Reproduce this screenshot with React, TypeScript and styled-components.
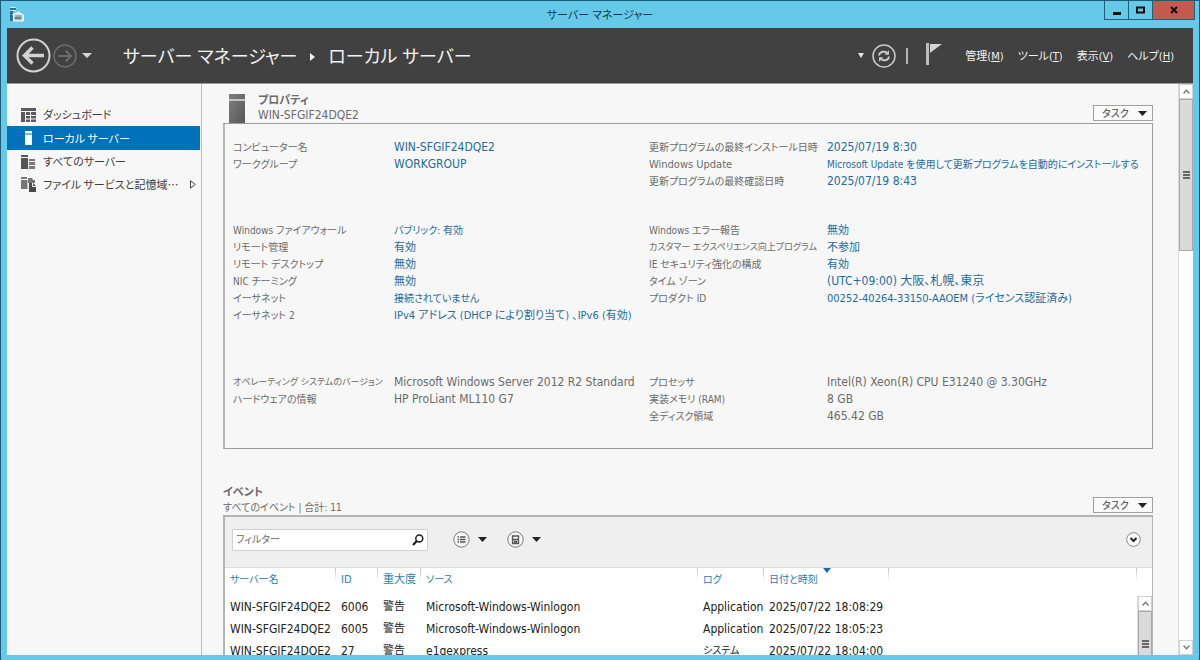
import React from "react";
import styled, { createGlobalStyle } from "styled-components";

const Global = createGlobalStyle`
  *, *::before, *::after { box-sizing: border-box; }
  body {
    margin: 0;
    font-family: "DejaVu Sans Condensed", "Noto Sans CJK JP", sans-serif;
    font-feature-settings: "palt";
    font-size: 11px;
    line-height: 17px;
    color: #6b6b6b;
    background: #66c9e9;
  }
  button, input { font: inherit; font-feature-settings: inherit; color: inherit; }
  button { padding: 0; border: 0; background: none; }
  svg { display: block; flex: none; }
`;

const Window = styled.div`
  display: flex;
  flex-direction: column;
  height: 100vh;
  padding: 0 6px 5px;
  overflow: hidden;
  background: #66c9e9;
  border: 1px solid #1b5b77;
  border-bottom: 0;
`;

const TitleBar = styled.header`
  display: grid;
  grid-template-columns: 1fr auto 1fr;
  flex: none;
  height: 27px;
  color: #12394a;
`;

const AppMark = styled.div`
  padding: 5px 0 0 2px;
`;

const WindowTitle = styled.h1`
  margin: 0;
  font-size: 11px;
  font-weight: 400;
  line-height: 30px;
`;

const Captions = styled.div`
  display: flex;
  justify-content: flex-end;
  align-items: flex-start;
  margin-right: -2px;
`;

const Caption = styled.button<{ $close?: boolean }>`
  display: grid;
  place-items: center;
  width: ${(p) => (p.$close ? 42 : 25)}px;
  height: 19px;
  border: 1px solid #1f5f78;
  border-top: 0;
  border-left-width: ${(p) => (p.$close ? 0 : 1)}px;
  margin-left: ${(p) => (p.$close ? 0 : -1)}px;
  background: ${(p) => (p.$close ? "#c35a50" : "transparent")};
`;

const Banner = styled.div`
  display: flex;
  align-items: center;
  flex: none;
  height: 56px;
  padding: 0 19px 0 9px;
  color: #f2f2f2;
  background: #414141;
  border-bottom: 1px solid #9a9a9a;
`;

const History = styled.div`
  display: flex;
  align-items: center;
  gap: 2px;
  width: 107px;
`;

const HistoryMenu = styled.button`
  margin-left: 3px;
`;

const Breadcrumb = styled.h2`
  display: flex;
  align-items: center;
  flex: 1;
  gap: 13px;
  margin: 0;
  padding-top: 2px;
  font-size: 18px;
  font-weight: 400;
  line-height: 28px;
  white-space: nowrap;
`;

const Tools = styled.div`
  display: flex;
  align-items: center;
  gap: 8px;
  margin-right: 23px;
`;

const Divider = styled.span`
  width: 2px;
  height: 16px;
  margin-left: 2px;
  background: #b5b5b5;
`;

const FlagButton = styled.button`
  margin: 0 0 4px 10px;
`;

const Menu = styled.nav`
  display: flex;
  gap: 14px;
  padding-top: 2px;
  white-space: nowrap;
`;

const Body = styled.div`
  display: flex;
  flex: 1;
  min-height: 0;
  background: #f7f7f7;
`;

const Sidebar = styled.nav`
  flex: none;
  width: 195px;
  padding-top: 19px;
  border-right: 1px solid #bdbdbd;
`;

const NavItem = styled.a<{ $active?: boolean }>`
  display: grid;
  grid-template-columns: 16px 1fr auto;
  align-items: center;
  gap: 6px;
  height: ${(p) => (p.$active ? 24 : 23)}px;
  padding: 0 4px 0 14px;
  margin-right: 1px;
  font-family: "Noto Sans CJK JP", sans-serif;
  font-size: 11px;
  white-space: nowrap;
  text-decoration: none;
  color: ${(p) => (p.$active ? "#fff" : "#3c3c3c")};
  background: ${(p) => (p.$active ? "#0072bc" : "transparent")};
`;

const Content = styled.main`
  display: flex;
  flex-direction: column;
  flex: 1;
  min-width: 0;
  padding: 9px 25px 0 21px;
`;

const SectionHead = styled.div`
  display: flex;
  justify-content: space-between;
  align-items: flex-end;
`;

const HeadTitle = styled.div`
  display: flex;
  align-items: center;
  gap: 13px;
`;

const Heading = styled.h3`
  margin: 0;
  font-size: 11px;
  font-weight: 700;
  line-height: 15px;
`;

const Sub = styled.p<{ $size: number }>`
  margin: 0;
  font-size: ${(p) => p.$size}px;
  line-height: 15px;
`;

const ServerIcon = styled.span`
  margin-left: 6px;
`;

const TaskButton = styled.button`
  display: flex;
  justify-content: space-between;
  align-items: center;
  width: 60px;
  height: 16px;
  padding: 0 5px 0 8px;
  margin-bottom: 2px;
  font-size: 10px;
  color: #444;
  background: #fafafa;
  border: 1px solid #a0a0a0;
`;

const PropertyPanel = styled.div`
  display: flex;
  flex-direction: column;
  flex: none;
  padding: 15px 0 23px 8px;
  border: 1px solid #9d9d9d;
  border-left: 2px solid #b4b4b4;
`;

const Group = styled.div<{ $gap: number }>`
  display: grid;
  grid-template-columns: 416px 1fr;
  margin-top: ${(p) => p.$gap}px;
`;

const List = styled.dl<{ $label: number }>`
  display: grid;
  grid-template-columns: ${(p) => p.$label}px 1fr;
  grid-auto-rows: 17px;
  align-content: start;
  margin: 0;
  white-space: nowrap;
`;

const Term = styled.dt<{ $size: number }>`
  font-size: ${(p) => p.$size}px;
`;

const Detail = styled.dd<{ $size: number }>`
  margin: 0;
  font-size: ${(p) => p.$size}px;
`;

const Link = styled.a`
  color: #1f6c9f;
  text-decoration: none;
`;

const EventSection = styled.section`
  display: flex;
  flex-direction: column;
  flex: 1;
  min-height: 0;
  margin-top: 36px;
`;

const EventPanel = styled.div`
  display: flex;
  flex-direction: column;
  flex: 1;
  min-height: 0;
  overflow: hidden;
  border: solid #b4b4b4;
  border-width: 2px 1px 0 2px;
  background: #fff;
`;

const FilterBar = styled.div`
  display: flex;
  align-items: center;
  flex: none;
  height: 51px;
  padding: 0 11px 5px 7px;
  background: #efefef;
  border-bottom: 1px solid #dcdcdc;
`;

const Search = styled.label`
  display: flex;
  align-items: center;
  width: 196px;
  height: 22px;
  padding: 0 3px;
  background: #fff;
  border: 1px solid #d0d0d0;
`;

const SearchInput = styled.input`
  flex: 1;
  min-width: 0;
  padding: 0;
  border: 0;
  outline: 0;
  font-size: 10px;
  background: none;
  &::placeholder { color: #6b6b6b; opacity: 1; }
`;

const RoundMenu = styled.button`
  display: flex;
  align-items: center;
  gap: 8px;
  margin-left: 25px;
  & + & { margin-left: 20px; }
`;

const Expand = styled.button`
  margin-left: auto;
`;

const TableArea = styled.div`
  display: flex;
  flex: 1;
  min-height: 0;
`;

const Table = styled.table`
  flex: 1;
  align-self: flex-start;
  width: 0;
  table-layout: fixed;
  border-collapse: collapse;
  color: #222;
  white-space: nowrap;
`;

const Th = styled.th<{ $w?: number; $size?: number }>`
  position: relative;
  width: ${(p) => (p.$w ? `${p.$w}px` : "auto")};
  height: 28px;
  padding: 3px 0 0 5px;
  font-size: ${(p) => p.$size ?? 10}px;
  font-weight: 400;
  text-align: left;
  vertical-align: top;
  color: #1f7fb5;
  background: linear-gradient(#c4c4c4, #fff) right top / 1px 14px no-repeat;
`;

const SortMark = styled.span`
  position: absolute;
  top: 0;
  right: 58px;
`;

const Td = styled.td<{ $size?: number }>`
  height: 22px;
  padding: 0 0 0 5px;
  font-size: ${(p) => p.$size ?? 12}px;
  line-height: 22px;
`;

const InnerScroll = styled.div`
  display: flex;
  flex: none;
  padding-top: 28px;
`;

const Track = styled.div`
  display: flex;
  flex-direction: column;
  flex: none;
  width: 15px;
  background: #fff;
  border-left: 1px solid #dadada;
`;

const ScrollStep = styled.button`
  display: grid;
  place-items: center;
  flex: none;
  height: 15px;
  background: #fff;
  border: 1px solid #d0d0d0;
`;

const Thumb = styled.div<{ $size: number }>`
  display: grid;
  place-items: center;
  flex: 0 0 ${(p) => p.$size}px;
  background: #dadada;
  border: 1px solid #aaa;
`;

const Spacer = styled.div`
  flex: 1;
`;

const Caret = ({ w = 9, color = "#222" }: { w?: number; color?: string }) => (
  <svg width={w} height={5} viewBox="0 0 10 5" preserveAspectRatio="none">
    <path d="M0 0h10L5 5z" fill={color} />
  </svg>
);

const Chevron = ({ down }: { down?: boolean }) => (
  <svg width="7" height="5" viewBox="0 0 7 5">
    <path d={down ? "M0.5 0.5L3.5 3.8L6.5 0.5" : "M0.5 4.5L3.5 1.2L6.5 4.5"} fill="none" stroke="#777" strokeWidth="1.4" />
  </svg>
);

const Grip = () => (
  <svg width="7" height="8" viewBox="0 0 7 8">
    <path d="M0 1h7M0 4h7M0 7h7" stroke="#666" strokeWidth="2" />
  </svg>
);

const BackIcon = () => (
  <svg width="35" height="35" viewBox="0 0 35 35" fill="none" stroke="#d2d2d2">
    <circle cx="17.500" cy="17.500" r="16" strokeWidth="2" />
    <path d="M28 17.500H10M16.500 9.500L8.500 17.500L16.500 25.500" strokeWidth="3.500" />
  </svg>
);

const ForwardIcon = () => (
  <svg width="24" height="24" viewBox="0 0 24 24" fill="none" stroke="#6b6b6b">
    <circle cx="12" cy="12" r="11" strokeWidth="1.600" />
    <path d="M5 12H17.500M12.500 6.500L18 12L12.500 17.500" strokeWidth="2.200" />
  </svg>
);

const RefreshIcon = () => (
  <svg width="24" height="24" viewBox="0 0 24 24" fill="none" stroke="#c8c8c8">
    <circle cx="12" cy="12" r="11" strokeWidth="1.5" />
    <path d="M7 11.500C7.500 8.500 10 7.600 12.500 7.800C14 7.900 15 8.700 15.800 9.600M17 12.500C16.500 15.500 14 16.400 11.500 16.200C10 16.100 9 15.300 8.200 14.400" strokeWidth="1.9" />
    <path d="M17 6.200V10.800H12.400zM7 17.800V13.200H11.600z" fill="#c8c8c8" stroke="none" />
  </svg>
);

const FlagIcon = () => (
  <svg width="16" height="22" viewBox="0 0 16 22">
    <path d="M0 0h3v22H0z" fill="#bdbdbd" />
    <path d="M4 1h12L4 10z" fill="#d2d2d2" />
  </svg>
);

const AppIcon = () => (
  <svg width="15" height="16" viewBox="0 0 15 16">
    <path d="M1 1h6v3H1zM1 5h3v10H1z" fill="#2f7391" />
    <path d="M1 1.500h6M1 4.500h6" stroke="#c9e7f0" />
    <path d="M3.500 8.500L9.500 6L14.500 9V15H4.500V9z" fill="#d5e6e8" stroke="#eef6f6" />
    <path d="M6 10h7M6 13V11.500h6V13z" stroke="#657f86" fill="#8aa4aa" />
  </svg>
);

const DashboardIcon = () => (
  <svg width="15" height="14" viewBox="0 0 15 14" fill="#5a5a5a">
    <path d="M0 0h15v3H0zM0 4h4v10H0zM5 4h4v3H5zM10 4h5v3h-5zM5 8h4v2.500H5zM10 8h5v2.500h-5zM5 11.500h4V14H5zM10 11.500h5V14h-5z" />
  </svg>
);

const LocalIcon = () => (
  <svg width="16" height="14" viewBox="0 0 16 14" fill="#fff">
    <path d="M4 0h7v2.500H4zM4 3.500h7V14H4z" />
  </svg>
);

const AllServersIcon = () => (
  <svg width="15" height="14" viewBox="0 0 15 14" fill="#555">
    <path d="M0 0h7v2H0zM0 3h7v11H0z" />
    <path d="M8 4h6v2H8zM8 7h6v3H8zM8 11h6v3H8z" fill="#7a7a7a" />
  </svg>
);

const FilesIcon = () => (
  <svg width="15" height="15" viewBox="0 0 15 15" fill="#777">
    <path d="M0 0h6v2H0zM0 3h6v9H0zM7 1h4l1 2h2v3H7z" />
    <path d="M8 6h4l3 3v6H8z" fill="#4b4b4b" />
    <path d="M11.500 6v3.500H15" fill="none" stroke="#f7f7f7" />
    <path d="M6.500 3v9" stroke="#bbb" />
  </svg>
);

const TowerIcon = () => (
  <svg width="16" height="29" viewBox="0 0 16 29">
    <defs>
      <linearGradient id="tower" x1="0" y1="0" x2="1" y2="1">
        <stop offset="0" stopColor="#808080" />
        <stop offset="1" stopColor="#565656" />
      </linearGradient>
    </defs>
    <path d="M0 0h16v5H0zM0 7h16v22H0z" fill="url(#tower)" />
    <path d="M0 5h16v2H0z" fill="#c4c4c4" />
  </svg>
);

const SearchIcon = () => (
  <svg width="12" height="12" viewBox="0 0 12 12" fill="none" stroke="#222">
    <circle cx="7.300" cy="4.500" r="3.500" strokeWidth="1.500" />
    <path d="M4.800 7L1 11" strokeWidth="2.200" />
  </svg>
);

const ListIcon = () => (
  <svg width="17" height="17" viewBox="0 0 17 17" fill="none">
    <circle cx="8.500" cy="8.500" r="7.700" fill="#f7f7f7" stroke="#777" />
    <path d="M4.500 6h1.500M7 6h5.500M4.500 8.500h1.500M7 8.500h5.500M4.500 11h1.500M7 11h5.500" stroke="#555" strokeWidth="1.300" />
  </svg>
);

const SaveIcon = () => (
  <svg width="17" height="17" viewBox="0 0 17 17" fill="none">
    <circle cx="8.500" cy="8.500" r="7.700" fill="#f7f7f7" stroke="#777" />
    <path d="M5.500 5h6v7.500h-6zM6 8.500h5M7.500 12.500v-2h2v2" stroke="#555" strokeWidth="1.300" />
  </svg>
);

const ExpandIcon = () => (
  <svg width="15" height="15" viewBox="0 0 15 15" fill="none">
    <circle cx="7.500" cy="7.500" r="6.800" fill="#fbfbfb" stroke="#888" />
    <path d="M4.500 6L7.500 9L10.500 6" stroke="#222" strokeWidth="2" />
  </svg>
);

type Item = { label: string; value: string; link?: boolean; labelSize?: number; valueSize?: number };

const groups: { gap: number; left: Item[]; right: Item[] }[] = [
  {
    gap: 0,
    left: [
      { label: "コンピューター名", value: "WIN-SFGIF24DQE2", link: true },
      { label: "ワークグループ", value: "WORKGROUP", link: true },
    ],
    right: [
      { label: "更新プログラムの最終インストール日時", value: "2025/07/19 8:30", link: true },
      { label: "Windows Update", labelSize: 11, value: "Microsoft Update を使用して更新プログラムを自動的にインストールする", valueSize: 10, link: true },
      { label: "更新プログラムの最終確認日時", value: "2025/07/19 8:43", link: true },
    ],
  },
  {
    gap: 32,
    left: [
      { label: "Windows ファイアウォール", value: "パブリック: 有効", valueSize: 10, link: true },
      { label: "リモート管理", value: "有効", valueSize: 11, link: true },
      { label: "リモート デスクトップ", value: "無効", valueSize: 11, link: true },
      { label: "NIC チーミング", value: "無効", valueSize: 11, link: true },
      { label: "イーサネット", value: "接続されていません", valueSize: 10, link: true },
      { label: "イーサネット 2", value: "IPv4 アドレス (DHCP により割り当て) 、IPv6 (有効)", valueSize: 11, link: true },
    ],
    right: [
      { label: "Windows エラー報告", value: "無効", valueSize: 11, link: true },
      { label: "カスタマー エクスペリエンス向上プログラム", labelSize: 9, value: "不参加", valueSize: 11, link: true },
      { label: "IE セキュリティ強化の構成", value: "有効", valueSize: 11, link: true },
      { label: "タイム ゾーン", value: "(UTC+09:00) 大阪、札幌、東京", link: true },
      { label: "プロダクト ID", value: "00252-40264-33150-AAOEM (ライセンス認証済み)", valueSize: 11, link: true },
    ],
  },
  {
    gap: 50,
    left: [
      { label: "オペレーティング システムのバージョン", labelSize: 9, value: "Microsoft Windows Server 2012 R2 Standard" },
      { label: "ハードウェアの情報", value: "HP ProLiant ML110 G7" },
    ],
    right: [
      { label: "プロセッサ", value: "Intel(R) Xeon(R) CPU E31240 @ 3.30GHz" },
      { label: "実装メモリ (RAM)", value: "8 GB" },
      { label: "全ディスク領域", value: "465.42 GB" },
    ],
  },
];

const events = [
  ["WIN-SFGIF24DQE2", "6006", "警告", "Microsoft-Windows-Winlogon", "Application", "2025/07/22 18:08:29"],
  ["WIN-SFGIF24DQE2", "6005", "警告", "Microsoft-Windows-Winlogon", "Application", "2025/07/22 18:05:23"],
  ["WIN-SFGIF24DQE2", "27", "警告", "e1qexpress", "システム", "2025/07/22 18:04:00"],
];

const cellSize = (text: string) => (/[ァ-ヶ]/.test(text) ? 10 : /[一-龠]/.test(text) ? 11 : 12);

const Properties = ({ items, label }: { items: Item[]; label: number }) => (
  <List $label={label}>
    {items.map((item) => (
      <React.Fragment key={item.label}>
        <Term $size={item.labelSize ?? 10}>{item.label}</Term>
        <Detail $size={item.valueSize ?? 12}>
          {item.link ? <Link href="#">{item.value}</Link> : item.value}
        </Detail>
      </React.Fragment>
    ))}
  </List>
);

const menus = [["管理", "M"], ["ツール", "T"], ["表示", "V"], ["ヘルプ", "H"]];

export default function App() {
  return (
    <Window>
      <Global />
      <TitleBar>
        <AppMark><AppIcon /></AppMark>
        <WindowTitle>サーバー マネージャー</WindowTitle>
        <Captions>
          <Caption aria-label="最小化">
            <svg width="10" height="10"><path d="M1 7h8v3H1z" fill="#111" /></svg>
          </Caption>
          <Caption aria-label="最大化">
            <svg width="10" height="8"><path d="M1 1.500h7v5H1z" fill="none" stroke="#111" strokeWidth="2" /></svg>
          </Caption>
          <Caption $close aria-label="閉じる">
            <svg width="8" height="8"><path d="M1 1L7 7M7 1L1 7" stroke="#111" strokeWidth="2" /></svg>
          </Caption>
        </Captions>
      </TitleBar>

      <Banner>
        <History>
          <button aria-label="戻る"><BackIcon /></button>
          <button aria-label="進む"><ForwardIcon /></button>
          <HistoryMenu aria-label="履歴"><Caret w={10} color="#d6d6d6" /></HistoryMenu>
        </History>
        <Breadcrumb>
          <span>サーバー マネージャー</span>
          <svg width="5" height="8"><path d="M0 0L5 4L0 8z" fill="#f2f2f2" /></svg>
          <span>ローカル サーバー</span>
        </Breadcrumb>
        <Tools>
          <Caret w={6} color="#e6e6e6" />
          <button aria-label="最新の情報に更新"><RefreshIcon /></button>
          <Divider />
          <FlagButton aria-label="通知"><FlagIcon /></FlagButton>
        </Tools>
        <Menu>
          {menus.map(([name, key]) => (
            <button key={key}>{name}(<u>{key}</u>)</button>
          ))}
        </Menu>
      </Banner>

      <Body>
        <Sidebar>
          <NavItem href="#"><DashboardIcon />ダッシュボード</NavItem>
          <NavItem href="#" $active><LocalIcon />ローカル サーバー</NavItem>
          <NavItem href="#"><AllServersIcon />すべてのサーバー</NavItem>
          <NavItem href="#">
            <FilesIcon />
            <span>ファイル サービスと記憶域…</span>
            <svg width="6" height="9"><path d="M0.500 0.800L5.300 4.500L0.500 8.200z" fill="none" stroke="#444" /></svg>
          </NavItem>
        </Sidebar>

        <Content>
          <section>
            <SectionHead>
              <HeadTitle>
                <ServerIcon><TowerIcon /></ServerIcon>
                <div>
                  <Heading>プロパティ</Heading>
                  <Sub $size={12}>WIN-SFGIF24DQE2</Sub>
                </div>
              </HeadTitle>
              <TaskButton>タスク<Caret /></TaskButton>
            </SectionHead>
            <PropertyPanel>
              {groups.map((g) => (
                <Group key={g.gap} $gap={g.gap}>
                  <Properties items={g.left} label={161} />
                  <Properties items={g.right} label={178} />
                </Group>
              ))}
            </PropertyPanel>
          </section>

          <EventSection>
            <SectionHead>
              <div>
                <Heading>イベント</Heading>
                <Sub $size={10}>すべてのイベント | 合計: 11</Sub>
              </div>
              <TaskButton>タスク<Caret /></TaskButton>
            </SectionHead>
            <EventPanel>
              <FilterBar>
                <Search>
                  <SearchInput placeholder="フィルター" aria-label="フィルター" />
                  <SearchIcon />
                </Search>
                <RoundMenu aria-label="条件"><ListIcon /><Caret /></RoundMenu>
                <RoundMenu aria-label="保存"><SaveIcon /><Caret /></RoundMenu>
                <Expand aria-label="展開"><ExpandIcon /></Expand>
              </FilterBar>
              <TableArea>
                <Table>
                  <thead>
                    <tr>
                      <Th $w={111}>サーバー名</Th>
                      <Th $w={42} $size={11}>ID</Th>
                      <Th $w={43} $size={11}>重大度</Th>
                      <Th $w={277}>ソース</Th>
                      <Th $w={66}>ログ</Th>
                      <Th $w={125}>日付と時刻<SortMark><Caret w={8} color="#1f6c9f" /></SortMark></Th>
                      <Th />
                    </tr>
                  </thead>
                  <tbody>
                    {events.map((row) => (
                      <tr key={row[5]}>
                        {row.map((cell, i) => <Td key={i} $size={cellSize(cell)}>{cell}</Td>)}
                        <Td />
                      </tr>
                    ))}
                  </tbody>
                </Table>
                <InnerScroll>
                  <Track>
                    <ScrollStep aria-label="上へ"><Chevron /></ScrollStep>
                    <Thumb $size={66}><Grip /></Thumb>
                  </Track>
                </InnerScroll>
              </TableArea>
            </EventPanel>
          </EventSection>
        </Content>

        <Track>
          <ScrollStep aria-label="上へスクロール"><Chevron /></ScrollStep>
          <Thumb $size={152}><Grip /></Thumb>
          <Spacer />
          <ScrollStep aria-label="下へスクロール"><Chevron down /></ScrollStep>
        </Track>
      </Body>
    </Window>
  );
}
